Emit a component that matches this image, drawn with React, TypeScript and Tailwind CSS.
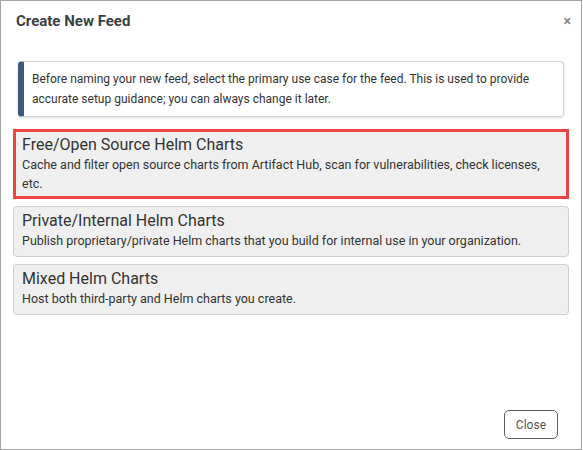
import React from 'react';

const options = [
  {
    title: 'Free/Open Source Helm Charts',
    desc: 'Cache and filter open source charts from Artifact Hub, scan for vulnerabilities, check licenses, etc.',
    selected: true,
  },
  {
    title: 'Private/Internal Helm Charts',
    desc: 'Publish proprietary/private Helm charts that you build for internal use in your organization.',
    selected: false,
  },
  {
    title: 'Mixed Helm Charts',
    desc: 'Host both third-party and Helm charts you create.',
    selected: false,
  },
];

const App: React.FC = () => (
  <div
    className="w-[582px] h-[450px] bg-white border border-[#a3a3a3] flex flex-col text-[#333]"
    style={{ fontFamily: 'Roboto, "Liberation Sans", sans-serif' }}
  >
    {/* Header */}
    <div className="flex items-center justify-between pl-[15px] pr-[10px] pt-[10px] h-[30px]">
      <h1 className="text-[15px] font-bold text-[#3a3f44]">Create New Feed</h1>
      <span className="text-[14px] font-bold text-[#8a8a8a] leading-none">×</span>
    </div>

    {/* Info callout */}
    <div className="mx-[17px] mt-[30px] rounded-[4px] border border-[#d4d4d4] border-l-[6px] border-l-[#3d5a78] shadow-[0_1px_3px_rgba(0,0,0,0.15)] pl-[8px] pr-3 py-[7px] text-[12px] leading-[20px]">
      Before naming your new feed, select the primary use case for the feed. This is used to provide accurate setup guidance; you can always change it later.
    </div>

    {/* Options */}
    <div className="mx-[12px] mt-[12px] flex flex-col gap-[7px]">
      {options.map((o) =>
        <div
          key={o.title}
          className={
            o.selected
              ? 'bg-[#efefef] border-[3px] border-[#f04444] pl-[6px] pr-3 pt-[3px] pb-[3px]'
              : 'bg-[#efefef] border border-[#cfcfcf] rounded-[4px] pl-[8px] pr-3 pt-[4px] pb-[6px]'
          }
        >
          <div className="text-[16px] leading-[20px] text-[#333]">{o.title}</div>
          <div className="text-[12.5px] leading-[19px] text-[#333]">{o.desc}</div>
        </div>
      )}
    </div>

    {/* Footer */}
    <div className="mt-auto flex justify-end pr-[23px] pb-[10px]">
      <button className="h-[29px] px-[11px] rounded-[5px] border border-[#5a5f66] bg-white text-[12px] text-[#555]">
        Close
      </button>
    </div>
  </div>
);

export default App;
